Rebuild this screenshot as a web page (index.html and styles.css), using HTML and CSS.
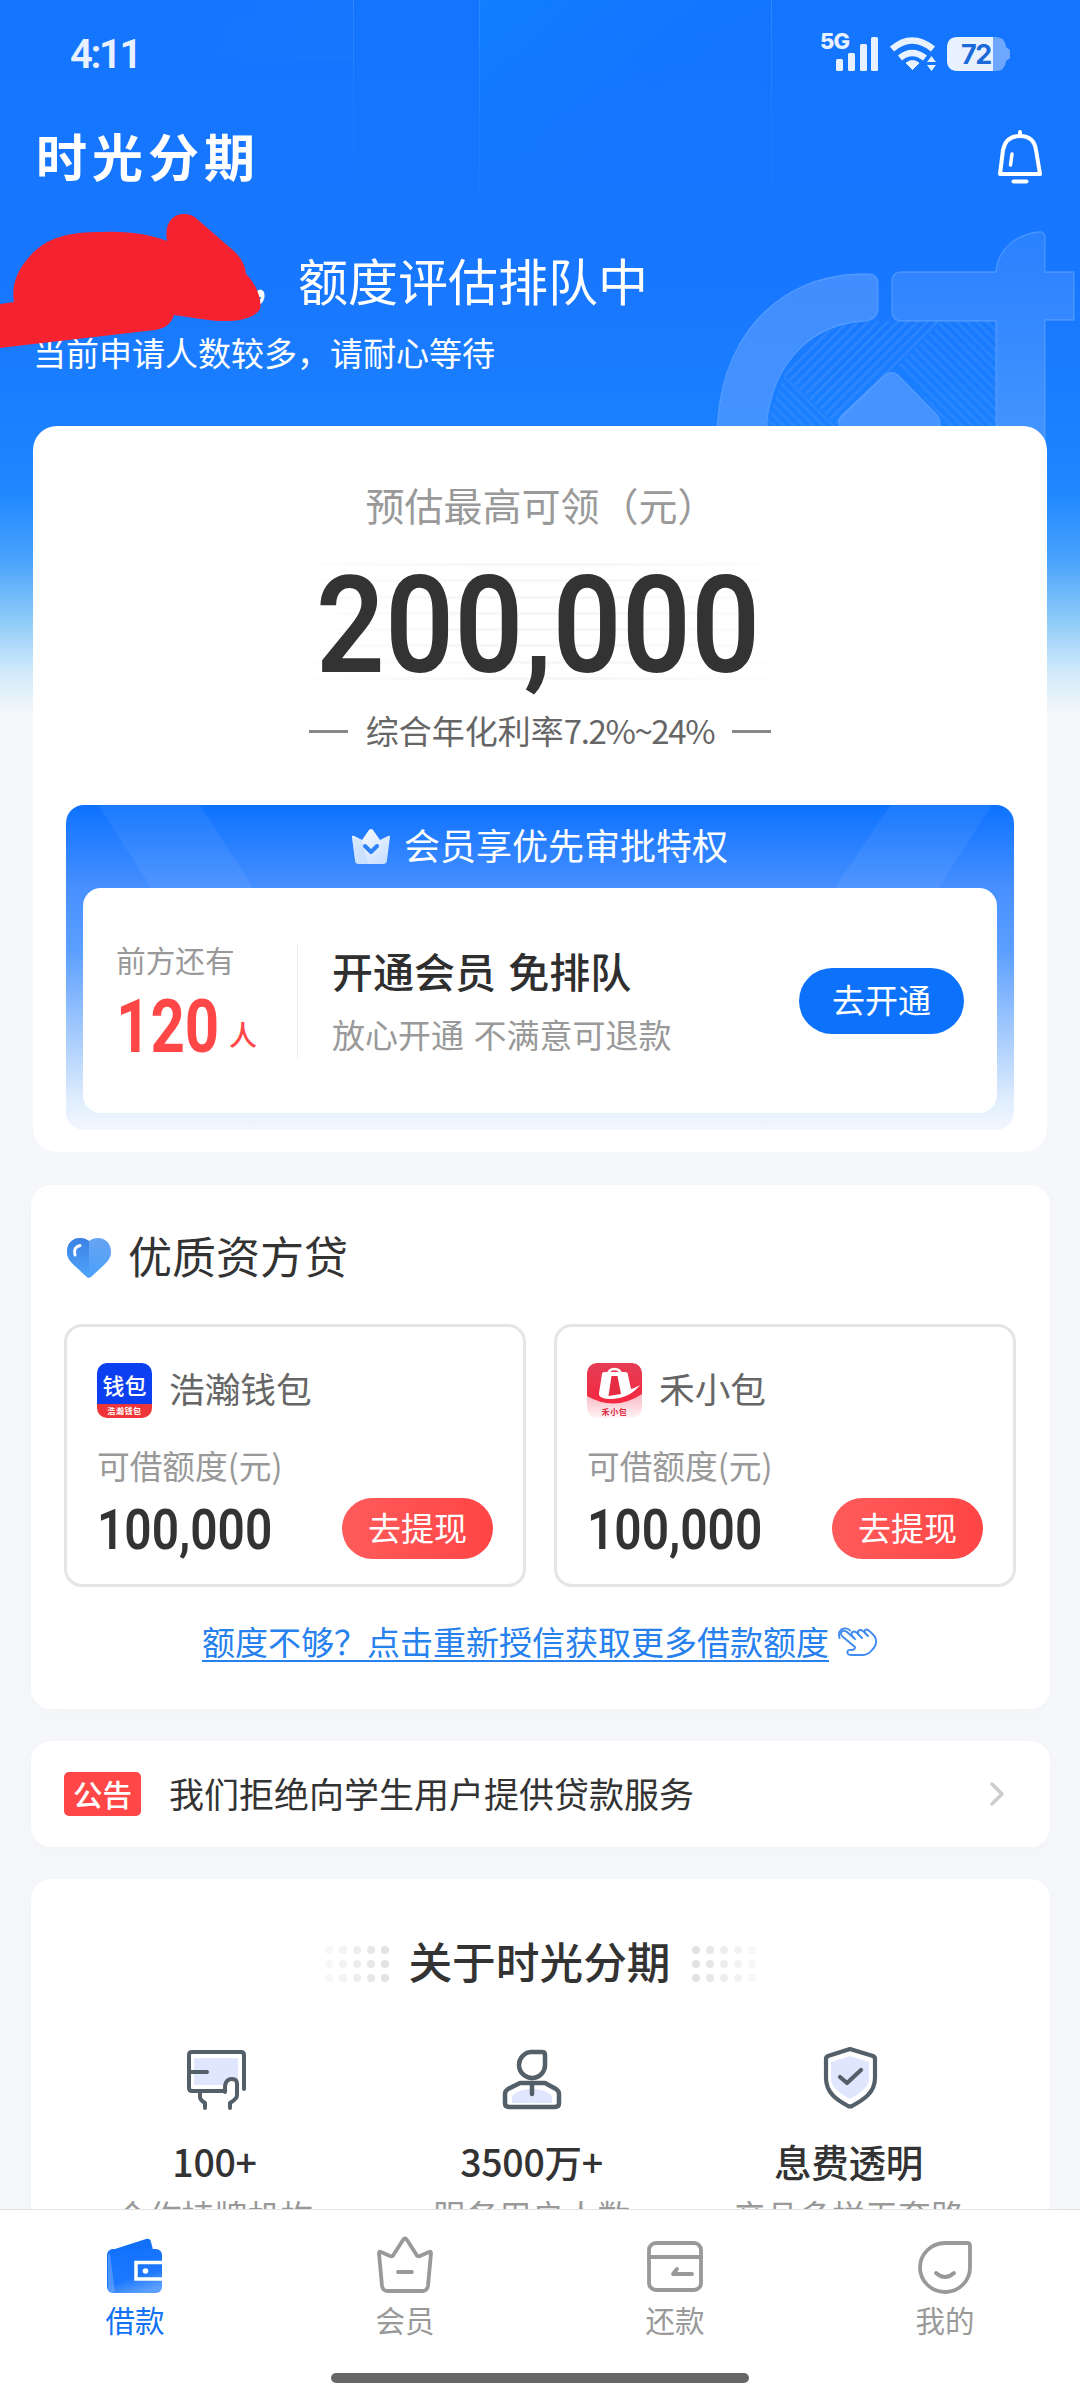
FILE: index.html
```html
<!DOCTYPE html>
<html lang="zh-CN">
<head>
<meta charset="utf-8">
<title>时光分期</title>
<link rel="stylesheet" href="styles.css">
</head>
<body>
<div class="page">
  <main class="content">
    <svg class="hero-art" width="1080" height="500" viewBox="0 0 1080 500" aria-hidden="true">
      <defs>
        <linearGradient id="ray" x1="0" y1="0" x2="1" y2="1"><stop offset="0" stop-color="#0a8cff" stop-opacity=".4"/><stop offset=".6" stop-color="#1677ff" stop-opacity="0"/></linearGradient>
        <linearGradient id="ray2" x1="0" y1="0" x2="1" y2="0"><stop offset="0" stop-color="#4b98ff" stop-opacity="0"/><stop offset="1" stop-color="#4b98ff" stop-opacity=".1"/></linearGradient>
        <linearGradient id="line" x1="0" y1="0" x2="0" y2="1"><stop offset="0" stop-color="#69a8ff" stop-opacity=".3"/><stop offset="1" stop-color="#69a8ff" stop-opacity="0"/></linearGradient>
        <linearGradient id="stem" x1="0" y1="0" x2="0" y2="1"><stop offset="0" stop-color="#6fa8ff" stop-opacity=".22"/><stop offset="1" stop-color="#6fa8ff" stop-opacity=".5"/></linearGradient>
        <pattern id="hatchA" width="7" height="7" patternUnits="userSpaceOnUse" patternTransform="rotate(45)"><rect width="2.5" height="7" fill="#5a9dff" opacity=".32"/></pattern>
        <pattern id="hatchB" width="7" height="7" patternUnits="userSpaceOnUse" patternTransform="rotate(-45)"><rect width="2.5" height="7" fill="#5a9dff" opacity=".26"/></pattern>
      </defs>
      <rect x="479" width="292" height="230" fill="url(#ray)"/>
      <rect x="160" width="193" height="60" fill="url(#ray2)" opacity=".5"/>
      <rect x="353" width="1" height="200" fill="url(#line)"/>
      <rect x="479" width="1" height="230" fill="url(#line)"/>
      <rect x="771" width="1" height="230" fill="url(#line)"/>
      <path d="M784 375 C800 345 830 322 870 321 L942 321 L838 426Z" fill="url(#hatchA)"/>
      <path d="M766 426 L784 375 L835 426Z" fill="url(#hatchB)"/>
      <path d="M898 366 L942 321 H996 V440 H960Z" fill="url(#hatchB)"/>
      <g stroke="#69a9ff" stroke-opacity=".55" stroke-width="1.3">
        <path d="M717 440 C717 340 775 276 860 274 H868 Q878 274 878 284 V308 Q878 320 864 321 C806 325 766 370 766 440Z" fill="#71a8ff" fill-opacity=".48"/>
        <path d="M902 272 H996 C998 248 1016 235 1038 232 Q1045 231 1045 238 V272 H1074 V320 H1045 V450 H996 V321 H902 Q892 321 892 311 V282 Q892 272 902 272Z" fill="url(#stem)"/>
        <path d="M839 440 V421 Q839 418 843 414 L884 376 Q892 369 899 376 L937 415 Q940 418 940 425 V440Z" fill="#71a8ff" fill-opacity=".5"/>
      </g>
    </svg>

    <header class="status">
      <span class="clock">4:11</span>
      <div class="signals">
        <span class="net">5G</span>
        <svg width="44" height="34" viewBox="0 0 44 34" fill="#e8f1ff"><rect x="1" y="22" width="7" height="12" rx="1.5"/><rect x="13" y="16" width="7" height="18" rx="1.5"/><rect x="25" y="7" width="7" height="27" rx="1.5"/><rect x="36" y="0" width="7" height="34" rx="1.5"/></svg>
        <svg class="wifi" width="46" height="34" viewBox="0 0 46 34"><g fill="none" stroke="#e8f1ff" stroke-width="6.5"><path d="M2 12 Q22 -5 43 12"/><path d="M10 21 Q22 11 35 21"/></g><path d="M16 26 Q22.500 21 29 26 L22.500 32.500Z" fill="#e8f1ff" stroke="#e8f1ff" stroke-linejoin="round"/><path d="M37 25 L41.500 19 L46 25Z M37 28 H46 L41.500 34Z" fill="#e8f1ff"/></svg>
        <div class="battery"><svg width="64" height="34" viewBox="0 0 64 34"><path d="M11 0 H49 Q58 0 59 10 L63 13 V21 L59 24 Q58 34 49 34 H11 Q0 34 0 23 V11 Q0 0 11 0Z" fill="#6da7ff"/><path d="M11 0 H46 V34 H11 Q0 34 0 23 V11 Q0 0 11 0Z" fill="#e8f1ff"/></svg><span>72</span></div>
      </div>
    </header>

    <div class="brand">
      <h1>时光分期</h1>
      <svg width="44" height="54" viewBox="0 0 44 54" fill="none" stroke="#fff" stroke-width="4" stroke-linecap="round" stroke-linejoin="round"><path d="M22 2 V6 M2 44 L5 20 Q8 6 22 6 Q36 6 38 20 L42 44Z"/><path d="M14 24 L12.500 35" stroke-width="3.500"/><path d="M15.500 51.500 H28.500"/></svg>
    </div>

    <section class="greeting">
      <h2>，额度评估排队中</h2>
      <p>当前申请人数较多，请耐心等待</p>
      <svg class="scribble" width="264" height="136" viewBox="0 212 264 136" aria-hidden="true"><path d="M0 304 L14 302 C11 286 17 270 30 256 C47 237 69 232 103 232 C131 231 151 235 167 241 C164 224 172 214 184 214 Q192 214 197 219 L235 252 Q245 262 246 274 C258 286 262 302 260 309 C252 322 224 323 201 319 L174 315 Q170 328 155 330 L25 345 L0 348Z" fill="#f7222f"/></svg>
    </section>

    <section class="card quota">
      <p class="quota-label">预估最高可领（元）</p>
      <div class="quota-lines"><span class="din quota-value">200,000</span></div>
      <p class="quota-rate"><i></i><span>综合年化利率<b>7.2%~24%</b></span><i></i></p>

      <div class="member">
        <svg class="member-rays" width="948" height="84" viewBox="0 0 948 84" aria-hidden="true"><path d="M32 0 H134 L188 84 H86Z" fill="#fff" opacity=".06"/><path d="M926 0 H824 L768 84 H872Z" fill="#fff" opacity=".06"/></svg>
        <div class="member-head">
          <svg width="40" height="36" viewBox="0 0 40 36"><defs><linearGradient id="cr" x1="0" y1="0" x2="1" y2="1"><stop offset="0" stop-color="#fff"/><stop offset="1" stop-color="#c3dcff"/></linearGradient></defs><path d="M1 9 Q1 7 3 8 L11 12 L18 2 Q20 0 22 2 L29 12 L37 8 Q39 7 39 9 L36 32 Q36 36 32 36 H8 Q4 36 4 32Z" fill="url(#cr)"/><path d="M1 9 L11 12 L17 36 H8 Q4 36 4 32Z" fill="#b8d5ff" opacity=".5"/><path d="M14 18 L20 24 L26 18" fill="none" stroke="#2c80f8" stroke-width="4" stroke-linecap="round" stroke-linejoin="round"/></svg>
          <span>会员享优先审批特权</span>
        </div>
        <div class="member-body">
          <div class="queue">
            <p>前方还有</p>
            <p class="queue-count"><span class="din">120</span><em>人</em></p>
          </div>
          <div class="offer">
            <h3>开通会员 免排队</h3>
            <p>放心开通 不满意可退款</p>
          </div>
          <button class="btn-open">去开通</button>
        </div>
      </div>
    </section>

    <section class="card loans">
      <h3 class="loans-title">
        <svg width="44" height="40" viewBox="0 0 44 40"><defs><linearGradient id="hl" x1="0" y1="0" x2="0" y2="1"><stop offset="0" stop-color="#3c82e4"/><stop offset="1" stop-color="#4da4fb"/></linearGradient><linearGradient id="hr" x1="0" y1="0" x2="0" y2="1"><stop offset="0" stop-color="#67a3f3"/><stop offset="1" stop-color="#4ba1fa"/></linearGradient></defs><path d="M22 3 C14 -3 0 0 0 14 C0 20 4 24 7 27 L20 39 Q22 40 24 39 L37 27 C40 24 44 20 44 14 C44 0 30 -3 22 3Z" fill="url(#hr)"/><path d="M22 3 C14 -3 0 0 0 14 C0 20 4 24 7 27 L20 39 Q21 40 22 40Z" fill="url(#hl)"/><path d="M13 7.500 Q6 9 8 17" fill="none" stroke="#fff" stroke-width="3" stroke-linecap="round"/></svg>
        <span>优质资方贷</span>
      </h3>
      <div class="loan-grid">
        <article class="loan">
          <div class="loan-name">
            <div class="app app-hh"><span class="app-word">钱包</span><span class="app-foot">浩瀚钱包</span></div>
            <span>浩瀚钱包</span>
          </div>
          <p class="loan-label">可借额度(元)</p>
          <div class="loan-row"><span class="din">100,000</span><button>去提现</button></div>
        </article>
        <article class="loan">
          <div class="loan-name">
            <div class="app app-hx">
              <svg width="55" height="55" viewBox="0 0 55 55"><defs><linearGradient id="hx" x1="0" y1="0" x2="0" y2="1"><stop offset="0" stop-color="#e63c55"/><stop offset="1" stop-color="#f32840"/></linearGradient><linearGradient id="hp" x1="0" y1="0" x2="0" y2="1"><stop offset=".6" stop-color="#f9bcc6"/><stop offset="1" stop-color="#fff5f6"/></linearGradient></defs><rect width="55" height="55" rx="9" fill="url(#hp)"/><path d="M0 9 Q0 0 9 0 H46 Q55 0 55 9 V31 Q28 49 0 33Z" fill="url(#hx)"/><path d="M15 11 Q15 9 18 9 H38 Q41 9 41 12 L44 26 Q48 25 53 22 Q43 35 25 36 Q11 36 12 30Z" fill="#fff"/><path d="M24.500 13 H30.500 L34 31 L21.500 33Z" fill="#e62d43"/><path d="M21 13 V11 Q22 6 27.500 6 Q33 6 34 11 V13" fill="none" stroke="#fff" stroke-width="2.500"/></svg>
              <span class="app-foot">禾小包</span>
            </div>
            <span>禾小包</span>
          </div>
          <p class="loan-label">可借额度(元)</p>
          <div class="loan-row"><span class="din">100,000</span><button>去提现</button></div>
        </article>
      </div>
      <p class="more"><a>额度不够？点击重新授信获取更多借款额度</a>
        <svg width="40" height="30" viewBox="0 0 40 30" fill="none" stroke="#3f8bf0" stroke-width="1.900" stroke-linecap="round" stroke-linejoin="round"><path d="M17 20 L4.500 9.500 Q1.500 6.500 4 4.500 Q6.500 3 9 5 L17 12 L14 8.500 Q12.500 5 16 4.500 Q18 4.500 21 8 Q18.500 3.500 22 3 Q24 2.500 27.500 6.500 Q25.500 2.500 28.500 2.500 Q30 2.500 34 6.500 Q39 11 38 16 Q37.500 20 34 23 Q30 28 25 28 H13 Q9 28 9.500 24.500 Q10 22.500 13 23 Q17 23 17 20Z"/><path d="M21 8 L24 11 M27.500 6.500 L30 9"/><path d="M1.500 11 Q-.5 3 6 1.500 Q10 .8 12 3.500"/></svg>
      </p>
    </section>

    <section class="card notice">
      <b>公告</b><span>我们拒绝向学生用户提供贷款服务</span>
      <svg width="16" height="26" viewBox="0 0 16 26" fill="none" stroke="#ccc" stroke-width="3.500" stroke-linecap="round" stroke-linejoin="round"><path d="M3 3 L13 13 L3 23"/></svg>
    </section>

    <section class="card about">
      <h3>
        <svg width="64" height="38" viewBox="0 0 64 38" fill="#e2e2e2"><g opacity=".25"><circle cx="4" cy="5" r="4"/><circle cx="4" cy="19" r="4"/><circle cx="4" cy="33" r="4"/></g><g opacity=".4"><circle cx="18" cy="5" r="4"/><circle cx="18" cy="19" r="4"/><circle cx="18" cy="33" r="4"/></g><g opacity=".6"><circle cx="32" cy="5" r="4"/><circle cx="32" cy="19" r="4"/><circle cx="32" cy="33" r="4"/></g><g opacity=".8"><circle cx="46" cy="5" r="4"/><circle cx="46" cy="19" r="4"/><circle cx="46" cy="33" r="4"/></g><circle cx="60" cy="5" r="4"/><circle cx="60" cy="19" r="4"/><circle cx="60" cy="33" r="4"/></svg>
        <span>关于时光分期</span>
        <svg class="flip" width="64" height="38" viewBox="0 0 64 38" fill="#e2e2e2"><g opacity=".25"><circle cx="4" cy="5" r="4"/><circle cx="4" cy="19" r="4"/><circle cx="4" cy="33" r="4"/></g><g opacity=".4"><circle cx="18" cy="5" r="4"/><circle cx="18" cy="19" r="4"/><circle cx="18" cy="33" r="4"/></g><g opacity=".6"><circle cx="32" cy="5" r="4"/><circle cx="32" cy="19" r="4"/><circle cx="32" cy="33" r="4"/></g><g opacity=".8"><circle cx="46" cy="5" r="4"/><circle cx="46" cy="19" r="4"/><circle cx="46" cy="33" r="4"/></g><circle cx="60" cy="5" r="4"/><circle cx="60" cy="19" r="4"/><circle cx="60" cy="33" r="4"/></svg>
      </h3>
      <div class="facts">
        <div class="fact">
          <svg width="64" height="64" viewBox="0 0 64 64" fill="none" stroke="#535f69" stroke-width="4" stroke-linecap="round" stroke-linejoin="round"><rect x="11" y="12" width="44" height="27" fill="#e0e6fd" stroke="none"/><path d="M41 45 H9 Q6 45 6 42 V9 Q6 6 9 6 H58 Q61 6 61 9 V43 M7 26 H24"/><path d="M42 46 V40 Q43 33 49 33 Q54 33 54 38 V49 Q54 53 47 57 V62" fill="#fff"/><path d="M17 46 V51 Q17 54 22 57 V62"/></svg>
          <b>100+</b><p>合作持牌机构</p>
        </div>
        <div class="fact">
          <svg width="64" height="64" viewBox="0 0 64 64" fill="none" stroke="#535f69" stroke-width="4.500" stroke-linecap="round" stroke-linejoin="round"><path d="M12 57 V50 Q18 43 32 43 Q46 43 52 50 V57Z" fill="#e0e6fd" stroke="none"/><path d="M31 6 H42 Q45 6 45 9 V18 A13 13 0 1 1 31 6Z M20 37 H45 L56 43 Q59 45 59 48 V57 Q59 61 55 61 H9 Q5 61 5 57 V48 Q5 45 8 43Z M32 38 V48"/></svg>
          <b>3500万+</b><p>服务用户人数</p>
        </div>
        <div class="fact">
          <svg width="64" height="64" viewBox="0 0 64 64" fill="none" stroke="#535f69" stroke-width="4.200" stroke-linecap="round" stroke-linejoin="round"><path d="M33 10 L52 16 V35 Q50 44 33 53 Q16 44 14 35 V16Z" fill="#e0e6fd" stroke="none"/><path d="M33 3 L56 10 Q58 11 58 13 V32 C58 47 46 54 35 60 Q33 61 31 60 C20 54 9 47 9 32 V13 Q9 11 11 10Z M23 31 L30 37 L44 24"/></svg>
          <b>息费透明</b><p>产品多样无套路</p>
        </div>
      </div>
    </section>
  </main>

  <nav class="tabs">
    <div class="tab active">
      <svg width="56" height="58" viewBox="0 0 56 58"><defs><linearGradient id="wl" x1=".2" y1="0" x2=".6" y2="1"><stop offset="0" stop-color="#1272fd"/><stop offset=".65" stop-color="#1b77fd"/><stop offset="1" stop-color="#5c9fff"/></linearGradient></defs><path d="M8 13 L39 3 Q43 2 44 6 L46 14 L46 20 H8Z" fill="#1270f6"/><rect x="0" y="13" width="55" height="44" rx="6" fill="url(#wl)"/><path d="M1 18 V52 Q1 57 8 56 L3 18Z" fill="#80b3ff" opacity=".5"/><path d="M56 26.500 H29 V43 H56" fill="none" stroke="#fff" stroke-width="3.500"/><circle cx="38.500" cy="35" r="2.800" fill="#fff"/></svg>
      <span>借款</span>
    </div>
    <div class="tab">
      <svg width="56" height="58" viewBox="0 0 56 58" fill="none" stroke="#999" stroke-width="3.800" stroke-linecap="round" stroke-linejoin="round"><path d="M2 17 Q2 15 4 16 L13 20 Q16 21 17 18 L26 4 Q28 1 30 4 L39 18 Q40 21 43 20 L52 16 Q54 15 54 17 L51 50 Q50 55 46 55 H10 Q6 55 5 50Z M21 36 H35"/></svg>
      <span>会员</span>
    </div>
    <div class="tab">
      <svg width="56" height="58" viewBox="0 0 56 58" fill="none" stroke="#999" stroke-width="3.800" stroke-linecap="round" stroke-linejoin="round"><rect x="2" y="7" width="52" height="47" rx="7"/><path d="M2 21 H54 M45 38 H26 L30 33"/></svg>
      <span>还款</span>
    </div>
    <div class="tab">
      <svg width="56" height="58" viewBox="0 0 56 58" fill="none" stroke="#999" stroke-width="3.800" stroke-linecap="round" stroke-linejoin="round"><path d="M28 7 H50 Q53 7 53 10 V31 A25 24.500 0 1 1 28 7Z M19 37 Q28 45 37 37"/></svg>
      <span>我的</span>
    </div>
    <i class="home-bar"></i>
  </nav>
</div>
</body>
</html>
```
FILE: styles.css
```css
* { box-sizing: border-box; margin: 0; padding: 0; }
body {
  font-family: "Noto Sans CJK SC", "Noto Sans", sans-serif;
  color: #333;
}
i, em { font-style: normal; }
h1, h2, h3 { font-weight: 400; }
svg { display: block; flex: none; }
button { border: 0; color: #fff; font: inherit; }
p, h1, h2, h3, span { white-space: nowrap; }

.page { width: 1080px; height: 2400px; display: flex; flex-direction: column; overflow: hidden; background: #f6f7fa; }
.content {
  position: relative;
  flex: 1;
  min-height: 0;
  overflow: hidden;
  background: linear-gradient(#1375ff 0, #1877ff 290px, #1a80ff 420px, #2088ff 495px, #4aa3fc 560px, #8dcaf9 620px, #cfe9fa 670px, #f6f8fa 716px, #f6f7fa 720px);
}
.hero-art { position: absolute; left: 0; top: 0; }
.din { display: inline-block; font-family: Roboto, sans-serif; font-weight: 600; transform-origin: 0 50%; }

.status { position: relative; height: 106px; display: flex; justify-content: space-between; padding: 0 69px 0 70px; color: #e8f1ff; }
.clock { font: 600 40px/106px Roboto, sans-serif; letter-spacing: -2.4px; padding-top: 2px; }
.signals { display: flex; padding-top: 37px; }
.net { font: 800 22px/20px Inter, sans-serif; letter-spacing: -1px; margin: -6px -14px 0 0; }
.wifi { margin-left: 11px; }
.battery { position: relative; margin-left: 11px; }
.battery span { position: absolute; left: 14px; top: 1px; font: 700 27px/34px Inter, sans-serif; letter-spacing: -1.5px; color: #1b68d8; }

.brand { position: relative; height: 106px; display: flex; align-items: center; justify-content: space-between; padding: 0 38px 4px 36px; color: #fff; }
.brand h1 { font-size: 51px; line-height: 60px; font-weight: 700; letter-spacing: 5px; position: relative; top: -2px; }

.greeting { position: relative; height: 214px; padding: 36px 0 0 33px; color: #fff; }
.greeting h2 { font-size: 50px; line-height: 62px; padding-left: 215px; font-weight: 400; }
.greeting p { font-size: 33px; line-height: 40px; margin-top: 22px; }
.scribble { position: absolute; left: 0; top: 0; }

.card { position: relative; background: #fff; border-radius: 20px; margin: 0 30px 0 31px; box-shadow: 0 6px 24px rgba(60, 70, 90, .02); }

.quota { height: 726px; margin: 0 33px; border-radius: 24px; padding: 54px 33px 0; display: flex; flex-direction: column; align-items: center; box-shadow: none; }
.quota-label { font-size: 39px; line-height: 48px; color: #999; padding-left: 2px; }
.quota-lines {
  width: 524px; height: 118px; margin-top: 35px; display: flex; padding-left: 38px;
  background: linear-gradient(90deg, #fff, transparent 40%, transparent 60%, #fff), repeating-linear-gradient(#f7f7f8 0 3px, #fff 3px 16.3px);
}
.quota-value { font-size: 136px; line-height: 126px; transform: scaleX(.885); letter-spacing: .6px; }
.quota-rate { display: flex; align-items: center; gap: 18px; height: 40px; margin-top: 29px; font-size: 33px; color: #666; }
.quota-rate b { font-weight: 400; letter-spacing: -1.4px; }
.quota-rate i { width: 39px; height: 2.5px; background: #888; margin-top: 3px; }

.member { position: relative; width: 948px; height: 325px; margin-top: 55px; border-radius: 18px; overflow: hidden; padding: 83px 17px 17px; background: linear-gradient(#0d72ff, #4890ff 26%, #5c9fff 45%, #a9cdfc 72%, #e3effd 92%, #f2f7ff); }
.member-rays { position: absolute; left: 0; top: 0; }
.member-head { position: absolute; left: 0; right: 0; top: 0; height: 83px; display: flex; align-items: center; justify-content: center; gap: 14px; font-size: 36px; color: #fff; }
.member-head svg, .member-head span { position: relative; top: -1px; }
.member-head span { top: -3px; left: -1px; }
.member-body { height: 225px; background: #fff; border-radius: 18px; display: flex; align-items: center; padding: 0 33px; }
.queue { width: 182px; height: 115px; border-right: 1.5px solid #eee; }
.queue p { font-size: 29.7px; line-height: 34px; color: #999; }
.queue .queue-count { display: flex; height: 76px; color: #ff4747; }
.queue-count .din { font-size: 75px; line-height: 99px; width: 112px; font-weight: 700; transform: scaleX(.8); }
.queue-count em { font-size: 28px; line-height: 114px; font-weight: 500; margin-left: 1px; }
.offer { flex: 1; padding-left: 34px; position: relative; top: -2px; }
.offer h3 { font-size: 41px; line-height: 56px; font-weight: 500; color: #2f2f2f; word-spacing: 3px; }
.offer p { font-size: 33px; line-height: 44px; margin-top: 14px; color: #999; word-spacing: 2px; }
.btn-open { width: 165px; height: 66px; border-radius: 33px; background: #0d72fb; font-size: 33px; line-height: 60px; padding-bottom: 3px; }

.loans { height: 524px; margin-top: 33px; padding: 44px 34px 0 33px; }
.loans-title { display: flex; align-items: center; gap: 17px; height: 59px; font-size: 44px; padding-left: 3px; }
.loans-title svg { position: relative; top: -1px; }
.loans-title span { position: relative; top: -4px; }
.loan-grid { display: grid; grid-template-columns: 1fr 1fr; gap: 28px; margin-top: 36px; }
.loan { height: 263px; border: 3px solid #e5e5e5; border-radius: 18px; padding: 36px 30px 0; }
.loan-name { display: flex; align-items: center; gap: 17px; height: 55px; font-size: 35.7px; color: #666; }
.loan-name > span { position: relative; top: -3px; }
.loan-label { font-size: 32.7px; line-height: 40px; color: #999; margin-top: 27px; }
.loan-row { display: flex; justify-content: space-between; margin-top: 13px; }
.loan-row .din { font-size: 55px; line-height: 64px; width: 180px; transform: scaleX(.87); }
.loan-row button { width: 151px; height: 61px; border-radius: 31px; background: linear-gradient(90deg, #ff5b5b, #ff4545); font-size: 33px; line-height: 56px; padding-bottom: 4px; }
.app { position: relative; width: 55px; height: 55px; border-radius: 10px; overflow: hidden; text-align: center; }
.app-hh { background: linear-gradient(#0b3ff0 0 74%, #ef3537 74%); color: #fff; display: flex; flex-direction: column; }
.app-word { font-size: 22px; line-height: 41px; font-weight: 500; padding-top: 1px; }
.app-foot { font-size: 8px; line-height: 12px; font-weight: 700; letter-spacing: .6px; }
.app-hx .app-foot { position: absolute; left: 0; right: 0; bottom: 0; color: #dc2b45; }
.more { display: flex; align-items: center; justify-content: center; gap: 9px; height: 44px; margin-top: 33px; font-size: 33px; color: #2680ee; }
.more a { line-height: 38px; border-bottom: 2px solid #2680ee; height: 39px; display: flex; align-items: center; }

.notice { height: 106px; margin-top: 32px; display: flex; align-items: center; padding: 0 45px 0 33px; font-size: 35px; }
.notice b { width: 77px; height: 44px; border-radius: 5px; background: #ff4747; color: #fff; font-size: 29.5px; line-height: 42px; text-align: center; font-weight: 500; margin-right: 28px; }
.notice span { flex: 1; position: relative; top: -2px; }

.about { height: 400px; margin-top: 32px; padding-top: 55px; }
.about h3 { display: flex; align-items: center; justify-content: center; gap: 20px; height: 60px; font-size: 43.7px; font-weight: 500; }
.about h3 span { position: relative; top: -4px; left: -1px; }
.flip { transform: scaleX(-1); }
.facts { display: grid; grid-template-columns: repeat(3, 1fr); padding: 0 43px 0 25px; margin-top: 52px; }
.fact { display: flex; flex-direction: column; align-items: center; }
.fact b { font-size: 37.5px; line-height: 50px; font-weight: 500; margin-top: 26px; letter-spacing: -.3px; }
.fact p { font-size: 33px; line-height: 40px; color: #999; margin-top: 9px; }

.tabs { position: relative; height: 191px; background: #fff; border-top: 1.5px solid #e2e2e2; display: grid; grid-template-columns: repeat(4, 1fr); }
.tab { display: flex; flex-direction: column; align-items: center; padding-top: 26px; color: #999; font-size: 29.500px; line-height: 40px; }
.tab span { margin-top: 5px; }
.tab.active { color: #1272f5; }
.home-bar { position: absolute; left: 331px; bottom: 17px; width: 418px; height: 10px; border-radius: 5px; background: #666; }
```
